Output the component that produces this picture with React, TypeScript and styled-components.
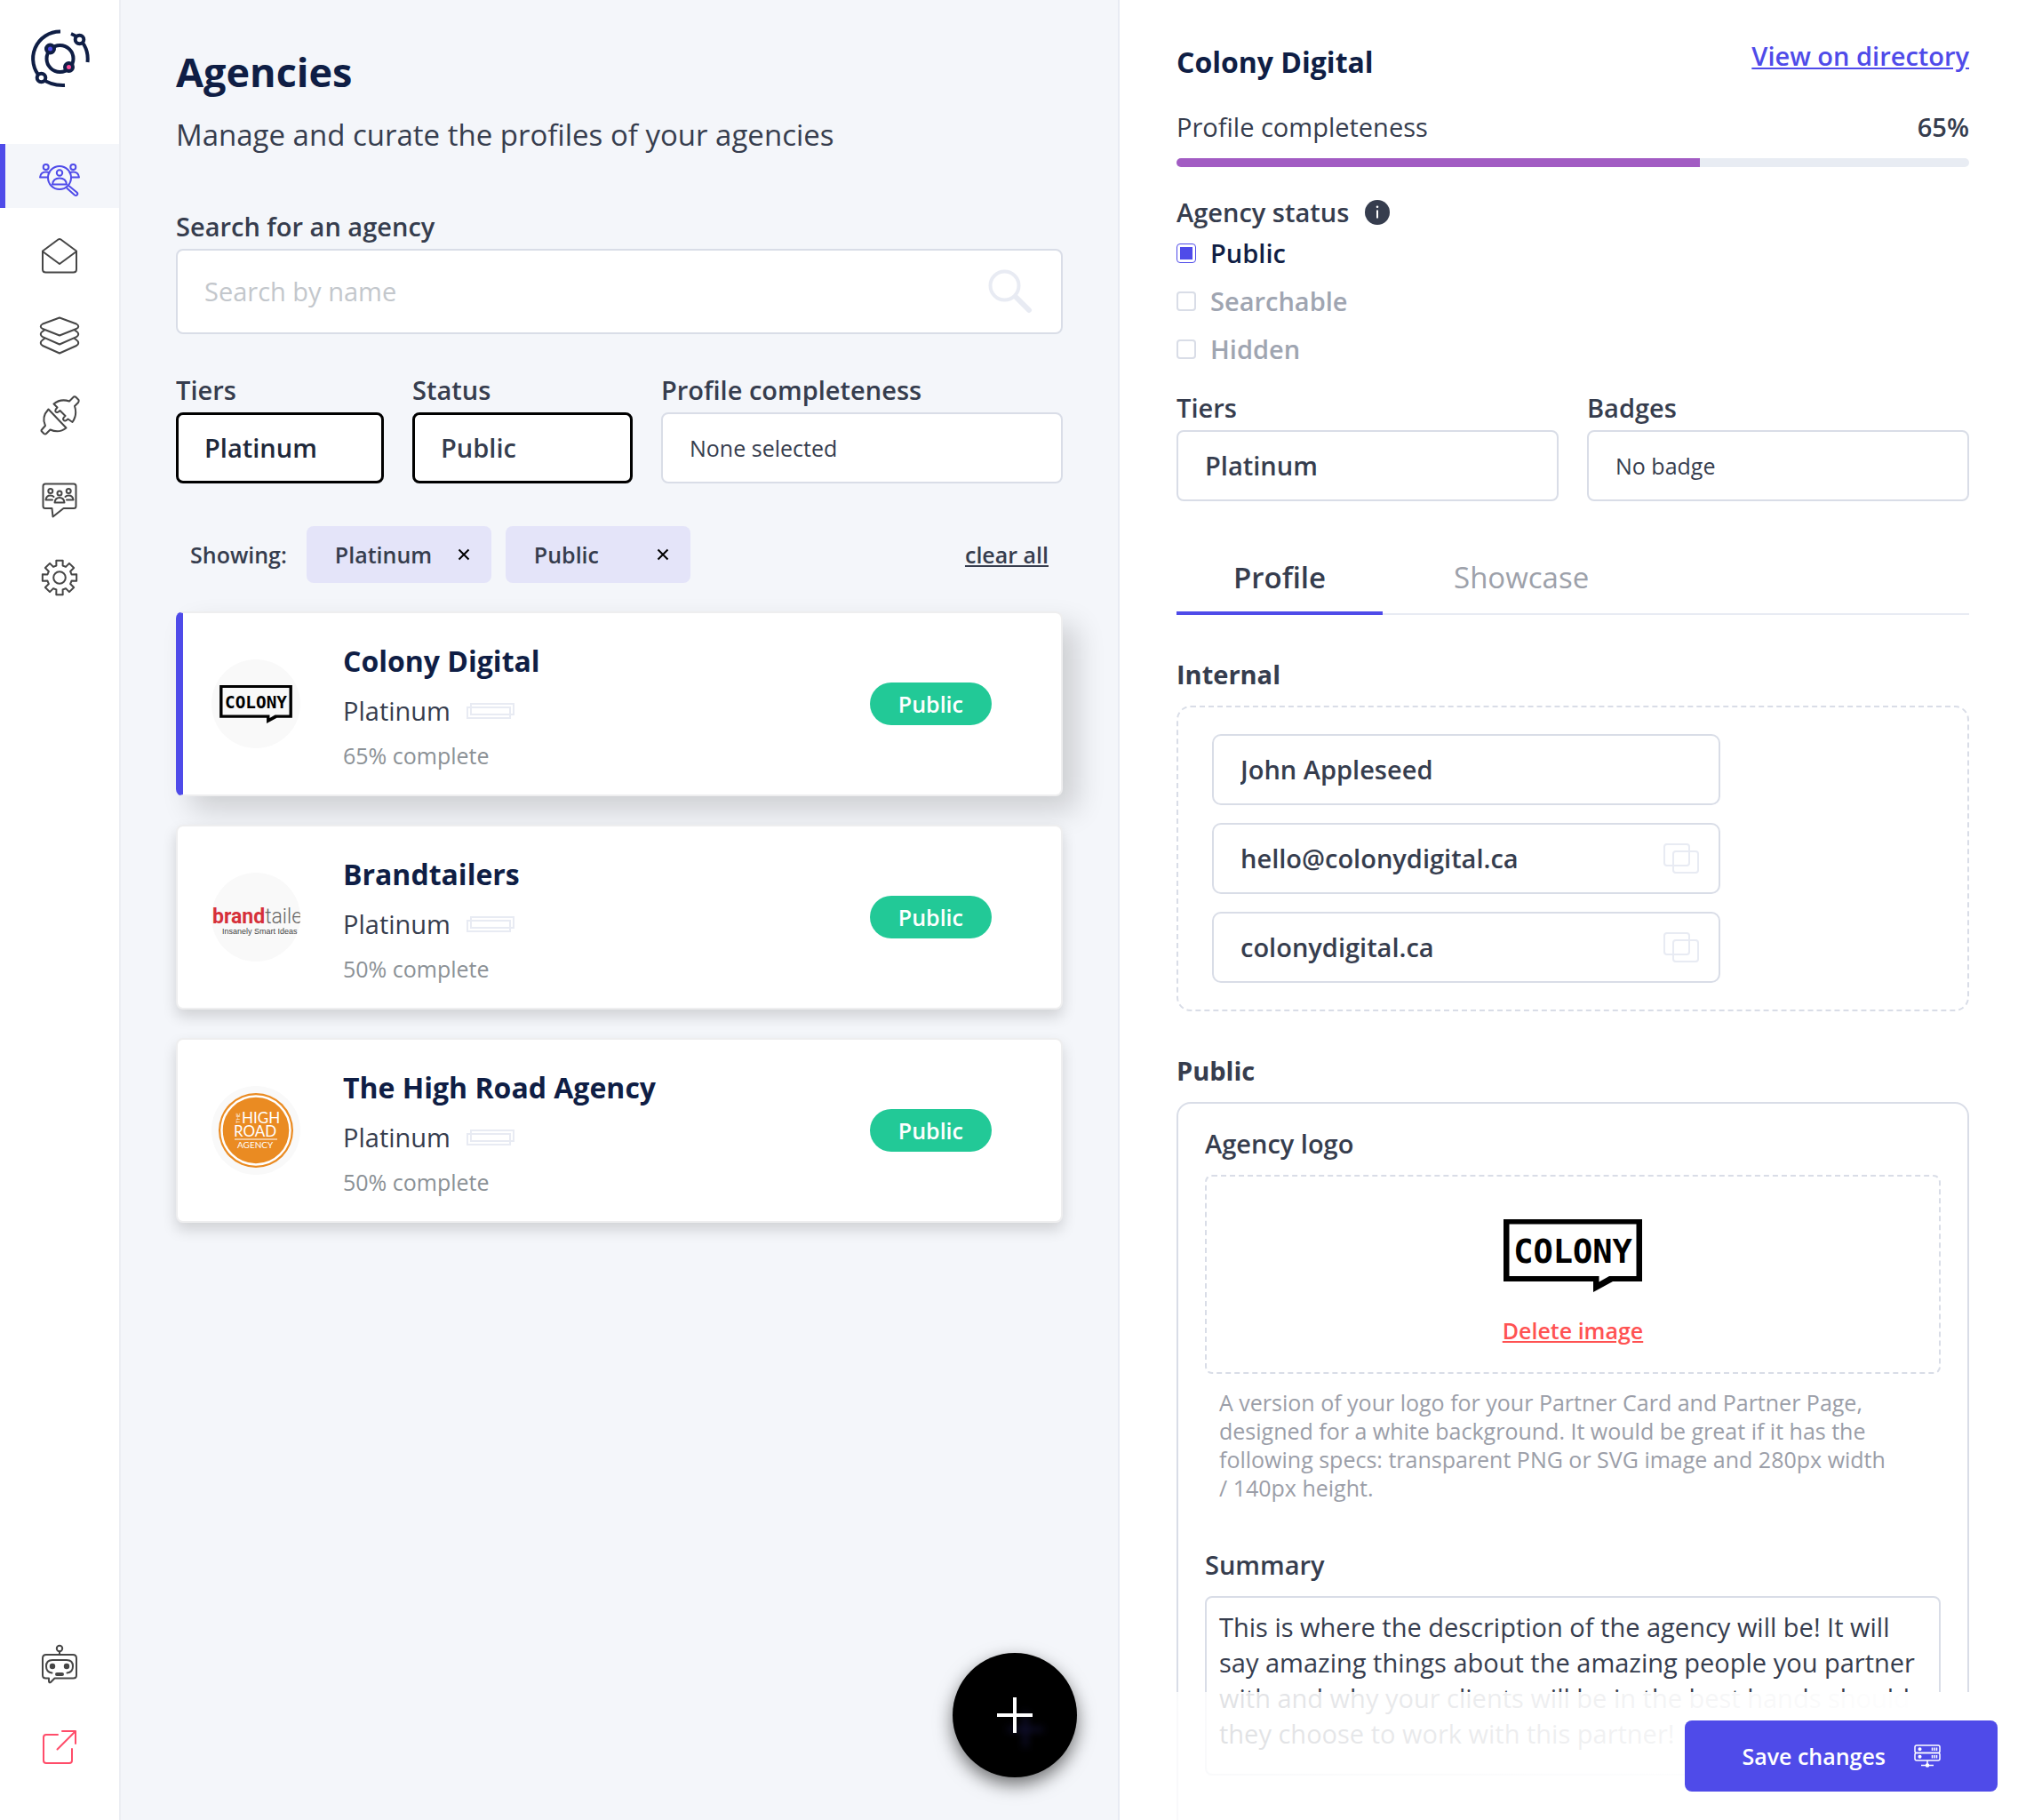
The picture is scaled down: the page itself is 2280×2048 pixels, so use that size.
import React from 'react';
import styled, { createGlobalStyle } from 'styled-components';

const color = {
  ink: '#363d4e',
  navy: '#0f1e45',
  accent: '#4f4be9',
  line: '#d9dde7',
  soft: '#e8ebf3',
  canvas: '#f4f6fa',
  muted: '#9da1aa',
  green: '#22c997',
  red: '#ff5252',
};

const GlobalStyle = createGlobalStyle`
  *, *::before, *::after { box-sizing: border-box; }
  body {
    margin: 0;
    background: #fff;
    color: ${color.ink};
    font-family: "Open Sans", "Noto Sans", sans-serif;
    font-size: 29px;
    line-height: 38px;
  }
  h1, h2, h3, p, ul { margin: 0; padding: 0; }
  button, input, select, textarea { font: inherit; color: inherit; margin: 0; }
  button { cursor: pointer; }
`;

/* ---------- Shell ---------- */

const Shell = styled.div`
  display: grid;
  grid-template-columns: 136px minmax(0, 281fr) minmax(0, 255fr);
  height: 100vh;
  overflow: hidden;
`;

const Sidebar = styled.nav`
  display: flex;
  flex-direction: column;
  border-right: 2px solid #eceef3;
  padding-bottom: 46px;
`;

const Brand = styled.a`
  display: flex;
  justify-content: center;
  height: 162px;
  padding-top: 32px;
`;

const NavGroup = styled.div<{ $end?: boolean }>`
  display: flex;
  flex-direction: column;
  gap: ${(p) => (p.$end ? 22 : 18)}px;
  margin-top: ${(p) => (p.$end ? 'auto' : '0')};
`;

const NavItem = styled.a<{ $active?: boolean; $tone?: string }>`
  display: flex;
  align-items: center;
  justify-content: center;
  height: 72px;
  color: ${(p) => p.$tone || '#464646'};
  background: linear-gradient(
    to right,
    ${(p) => (p.$active ? color.accent : 'transparent')} 6px,
    ${(p) => (p.$active ? color.canvas : 'transparent')} 6px
  );
`;

/* ---------- Shared form parts ---------- */

const Field = styled.div`
  display: flex;
  flex-direction: column;
  gap: 6px;
  min-width: 0;
`;

const Label = styled.label`
  font-weight: 600;
`;

const Select = styled.select<{ $filled?: boolean; $strong?: boolean; $small?: boolean }>`
  appearance: none;
  width: 100%;
  height: 80px;
  padding: 0 ${(p) => (p.$filled ? 29 : 30)}px;
  border: ${(p) => (p.$filled ? '3px solid #000' : `2px solid ${color.line}`)};
  border-radius: 8px;
  background: #fff;
  font-size: ${(p) => (p.$small ? 25 : 29)}px;
  font-weight: ${(p) => (p.$small ? 400 : 600)};
  color: ${(p) => (p.$strong ? '#20283a' : color.ink)};
`;

/* ---------- Agency list ---------- */

const List = styled.main`
  position: relative;
  padding: 51px 62px 48px;
  background: ${color.canvas};
  border-right: 2px solid ${color.soft};
`;

const PageTitle = styled.h1`
  font-size: 45px;
  line-height: 60px;
  font-weight: 700;
  color: ${color.navy};
`;

const Lead = styled.p`
  margin-top: 19px;
  margin-bottom: 62px;
  font-size: 33px;
  line-height: 44px;
`;

const SearchBox = styled.div`
  display: flex;
  align-items: center;
  height: 96px;
  padding: 0 32px 0 30px;
  border: 2px solid ${color.line};
  border-radius: 8px;
  background: #fff;
`;

const SearchInput = styled.input`
  flex: 1;
  min-width: 0;
  border: 0;
  padding: 0;
  outline: 0;
  background: transparent;
  &::placeholder { color: #c3c7cc; opacity: 1; }
`;

const Filters = styled.div`
  display: grid;
  grid-template-columns: 117fr 124fr 226fr;
  gap: 32px;
  margin-top: 44px;
`;

const Showing = styled.div`
  display: flex;
  align-items: center;
  gap: 16px;
  margin: 48px 0 32px;
  padding: 0 16px;
  font-size: 25px;
  font-weight: 600;
`;

const ShowingLabel = styled.span`
  margin-right: 6px;
`;

const Chip = styled.span`
  display: flex;
  align-items: center;
  justify-content: space-between;
  width: 208px;
  height: 64px;
  padding: 0 24px 0 32px;
  border-radius: 8px;
  background: #e4e4f9;
`;

const ChipClose = styled.button`
  display: flex;
  padding: 0;
  border: 0;
  background: none;
  color: #000;
`;

const ClearAll = styled.button`
  margin-left: auto;
  padding: 0;
  border: 0;
  background: none;
  text-decoration: underline;
`;

const Cards = styled.ul`
  display: flex;
  flex-direction: column;
  gap: 32px;
  list-style: none;
`;

const Card = styled.li<{ $selected?: boolean }>`
  display: flex;
  align-items: center;
  gap: 48px;
  height: 208px;
  padding: 0 78px 0 ${(p) => (p.$selected ? 32 : 38)}px;
  border: 2px solid #eeeeef;
  border-left: ${(p) => (p.$selected ? `8px solid ${color.accent}` : '2px solid #eeeeef')};
  border-radius: 8px;
  background: #fff;
  box-shadow: ${(p) =>
    p.$selected
      ? '16px 16px 32px rgba(0, 0, 0, 0.16)'
      : '0 8px 16px rgba(0, 0, 0, 0.15)'};
`;

const Avatar = styled.div`
  display: flex;
  align-items: center;
  justify-content: center;
  flex: none;
  width: 100px;
  height: 100px;
  border-radius: 50%;
  overflow: hidden;
  background: #f9f9f9;
`;

const CardBody = styled.div`
  display: flex;
  flex-direction: column;
  flex: 1;
  gap: 14px;
  min-width: 0;
  padding-top: 4px;
`;

const AgencyName = styled.h2`
  font-size: 32px;
  line-height: 44px;
  font-weight: 700;
  color: ${color.navy};
`;

const Tier = styled.p`
  display: flex;
  align-items: center;
  gap: 18px;
  line-height: 40px;
`;

const Complete = styled.p`
  font-size: 25px;
  line-height: 32px;
  color: #8b9196;
`;

const Pill = styled.span`
  padding: 0 32px;
  border-radius: 24px;
  background: ${color.green};
  color: #fff;
  font-size: 25px;
  line-height: 48px;
  font-weight: 600;
`;

const AddButton = styled.button`
  position: absolute;
  right: 46px;
  bottom: 48px;
  display: flex;
  align-items: center;
  justify-content: center;
  width: 140px;
  height: 140px;
  border: 0;
  border-radius: 50%;
  background: #000;
  box-shadow: 0 8px 20px rgba(0, 0, 0, 0.55);
  svg { filter: drop-shadow(12px 16px 4px rgba(79, 75, 233, 0.25)); }
`;

/* ---------- Detail panel ---------- */

const Panel = styled.aside`
  position: relative;
  height: 100vh;
`;

const PanelScroll = styled.div`
  height: 100%;
  padding: 43px 64px 0;
  overflow-y: auto;
  scrollbar-width: none;
`;

const Between = styled.div`
  display: flex;
  justify-content: space-between;
  align-items: flex-start;
`;

const PanelTitle = styled.h2`
  font-size: 32px;
  line-height: 54px;
  font-weight: 700;
  color: ${color.navy};
`;

const DirectoryLink = styled.a`
  line-height: 40px;
  font-weight: 600;
  color: ${color.accent};
`;

const Completeness = styled.div`
  margin-top: 27px;
`;

const Percent = styled.span`
  font-weight: 600;
`;

const Track = styled.div`
  height: 10px;
  margin-top: 16px;
  border-radius: 5px;
  overflow: hidden;
  background: #e8ecf3;
`;

const Bar = styled.div`
  height: 100%;
  background: #a25cc3;
`;

const StatusGroup = styled.fieldset`
  margin: 32px 0 28px;
  padding: 0;
  border: 0;
`;

const Legend = styled.legend`
  display: flex;
  align-items: center;
  gap: 18px;
  padding: 0;
  margin-bottom: 8px;
  font-weight: 600;
`;

const Options = styled.div`
  display: flex;
  flex-direction: column;
  gap: 16px;
`;

const Option = styled.label`
  display: flex;
  align-items: center;
  gap: 16px;
  font-weight: 600;
  color: #9fa5b1;
  &:has(input:checked) { color: ${color.navy}; }
`;

const Tick = styled.input`
  appearance: none;
  width: 22px;
  height: 22px;
  border: 2px solid ${color.line};
  border-radius: 4px;
  background: #fff;
  &:checked {
    border: 1px solid ${color.accent};
    padding: 3px;
    background: ${color.accent} content-box;
  }
`;

const TwoUp = styled.div`
  display: grid;
  grid-template-columns: 1fr 1fr;
  gap: 32px;
`;

const Tabs = styled.div`
  display: flex;
  gap: 16px;
  margin-top: 64px;
  box-shadow: inset 0 -2px 0 ${color.soft};
`;

const Tab = styled.button<{ $active?: boolean }>`
  padding: 0 64px 16px;
  border: 0;
  border-bottom: 4px solid ${(p) => (p.$active ? color.accent : 'transparent')};
  background: none;
  font-size: 33px;
  line-height: 44px;
  font-weight: ${(p) => (p.$active ? 600 : 400)};
  color: ${(p) => (p.$active ? color.ink : color.muted)};
`;

const SectionTitle = styled.h3`
  margin: 48px 0 16px;
  font-size: 29px;
  line-height: 38px;
  font-weight: 700;
`;

const Internal = styled.div`
  display: flex;
  flex-direction: column;
  gap: 20px;
  padding: 30px 38px;
  border: 2px dashed ${color.line};
  border-radius: 16px;
`;

const CopyField = styled.div`
  display: flex;
  align-items: center;
  max-width: 572px;
  height: 80px;
  padding: 0 22px 0 30px;
  border: 2px solid ${color.line};
  border-radius: 10px;
  background: #fff;
`;

const CopyInput = styled.input`
  flex: 1;
  min-width: 0;
  padding: 0;
  border: 0;
  outline: 0;
  background: transparent;
  font-weight: 600;
`;

const IconButton = styled.button`
  display: flex;
  padding: 0;
  border: 0;
  background: none;
`;

const PublicBox = styled.div`
  display: flex;
  flex-direction: column;
  padding: 26px 30px 160px;
  border: 2px solid ${color.line};
  border-radius: 16px;
`;

const BoxHeading = styled.h4`
  margin: 0 0 16px;
  font-size: 29px;
  line-height: 38px;
  font-weight: 600;
`;

const LogoDrop = styled.div`
  display: flex;
  flex-direction: column;
  align-items: center;
  height: 224px;
  padding-top: 48px;
  border: 2px dashed ${color.line};
  border-radius: 8px;
`;

const DeleteImage = styled.button`
  margin-top: 27px;
  padding: 0;
  border: 0;
  background: none;
  font-size: 25px;
  line-height: 32px;
  font-weight: 600;
  color: ${color.red};
  text-decoration: underline;
`;

const Help = styled.p`
  margin: 16px 0 52px;
  padding: 0 52px 0 16px;
  font-size: 25px;
  line-height: 32px;
  color: #9b9ea8;
`;

const SummaryLabel = styled.label`
  margin-bottom: 16px;
  font-weight: 600;
`;

const Summary = styled.textarea`
  height: 202px;
  padding: 13px 14px;
  border: 2px solid ${color.line};
  border-radius: 8px;
  resize: none;
  overflow: hidden;
  line-height: 40px;
`;

const SaveBar = styled.div`
  position: absolute;
  left: 0;
  right: 0;
  bottom: 0;
  display: flex;
  justify-content: flex-end;
  padding: 32px;
  background: linear-gradient(75deg, rgba(255, 255, 255, 0.82), #fff 90%);
`;

const SaveButton = styled.button`
  display: flex;
  align-items: center;
  gap: 32px;
  height: 80px;
  padding: 0 64px;
  border: 0;
  border-radius: 8px;
  background: ${color.accent};
  color: #fff;
  font-size: 25px;
  font-weight: 600;
`;

/* ---------- Drawings ---------- */

const Line: React.FC<{ w: number; h: number; top?: number; children: React.ReactNode }> = ({ w, h, top = 0, children }) => (
  <svg width={w} height={h + top} viewBox={`0 ${-top} ${w} ${h + top}`} fill="none" stroke="currentColor" strokeWidth="2" strokeLinejoin="round" strokeLinecap="round" aria-hidden="true">
    {children}
  </svg>
);

const OrbitLogo = () => (
  <svg width="68" height="68" viewBox="-1 0 68 68" fill="none" stroke={color.navy} strokeWidth="4" aria-hidden="true">
    <path d="M34 3.500A30.500 30.500 0 0 0 12 55.500C18 60.500 27 64.500 39 64" />
    <path d="M46 6C59 11 66 24 64.500 38" />
    <circle cx="33.500" cy="34" r="15" />
    <circle cx="12.500" cy="55.500" r="4.800" fill="#fff" />
    <circle cx="55.500" cy="12.500" r="4.800" fill="#fff" />
    <circle cx="22.500" cy="23" r="4.500" fill={color.accent} />
    <circle cx="43.500" cy="43.500" r="4.500" fill="#ff4d9a" />
  </svg>
);

const AgenciesIcon = () => (
  <Line w={48} h={40} top={8}>
    <circle cx="24" cy="18" r="13" />
    <circle cx="24" cy="12.500" r="3.200" />
    <path d="M16 25.500C16.500 20.500 19 18.500 24 18.500S31.500 20.500 32 25.500Z" />
    <circle cx="8.700" cy="6" r="3" />
    <path d="M11 17.500H2C2.500 13.500 4.500 11.500 8.700 11.500C10.500 11.500 11.500 11.800 12.500 12.500" />
    <circle cx="39.300" cy="6" r="3" />
    <path d="M37 17.500H46C45.500 13.500 43.500 11.500 39.300 11.500C37.500 11.500 36.500 11.800 35.500 12.500" />
    <path d="M32.500 30L41 37.500C43 39 45.500 36.500 43.500 34.500L35 27.500" />
  </Line>
);

const MailIcon = () => (
  <Line w={42} h={42}>
    <path d="M2 15.500L19.500 2.500Q21 1.500 22.500 2.500L40 15.500V36Q40 39.500 36.500 39.500H5.500Q2 39.500 2 36Z" />
    <path d="M2 16L21 30L40 16" />
  </Line>
);

const LayersIcon = () => (
  <Line w={46} h={44}>
    <path d="M23 1.500L42 8.500Q46.500 11 42 14L23 21.500L4 14Q-.5 11 4 8.500Z" />
    <path d="M6 15.500L4 16.800Q-.5 20 4 23.200L23 31.500L42 23.200Q46.500 20 42 16.800L40 15.500" />
    <path d="M6 25L4 26.500Q-.5 30 4 33L23 41.500L42 33Q46.500 30 42 26.500L40 25" />
  </Line>
);

const PlugIcon = () => (
  <Line w={45} h={46}>
    <path d="M15.500 9.500C21 5 27 4.500 33 6.500L38 1.500Q39.500 1 40.500 2L43.500 5Q44 6.500 43 8L39 12C41 18 40 25 36.500 30L31.500 26.500Q28 30 26.500 27.500Q25 26 28.500 23L22.500 17Q19 20.500 17.500 18Q16.500 16.500 19.500 13.500Z" />
    <path d="M9.500 15.500L29.500 36.500C24 41 17 41 11.500 38.500L7 43Q6 44 4.500 43L2 40.500Q1 39.500 2 38.500L6 34C3 28 4.500 21 9.500 15.500Z" />
  </Line>
);

const CommunityIcon = () => (
  <Line w={40} h={40} top={10}>
    <path d="M11.500 29H4Q1.500 29 1.500 26.500V4Q1.500 1.500 4 1.500H36Q38.500 1.500 38.500 4V26.500Q38.500 29 36 29H24.500L12.500 38.500Z" />
    <circle cx="9.800" cy="9.500" r="2.500" />
    <circle cx="20" cy="12" r="2.500" />
    <circle cx="30.200" cy="9.500" r="2.500" />
    <path d="M12 19.500H4.500C5 16 7 14.500 9.800 14.500Q12 14.500 13.500 16" />
    <path d="M28 19.500H35.500C35 16 33 14.500 30.200 14.500Q28 14.500 26.500 16" />
    <path d="M14.500 22.500C15 18.500 17 17 20 17S25 18.500 25.500 22.500Z" />
  </Line>
);

const gearPath = (() => {
  const pts: string[] = [];
  for (let i = 0; i < 8; i++) {
    const a = (i * Math.PI) / 4;
    [[14, -0.26], [19.5, -0.19], [19.5, 0.19], [14, 0.26]].forEach(([r, d]) => {
      pts.push(`${(21 + r * Math.sin(a + d)).toFixed(2)} ${(21 - r * Math.cos(a + d)).toFixed(2)}`);
    });
  }
  return `M${pts.join('L')}Z`;
})();

const GearIcon = () => (
  <Line w={42} h={42} top={4}>
    <path d={gearPath} />
    <circle cx="21" cy="21" r="6.800" />
  </Line>
);

const BotIcon = () => (
  <Line w={42} h={45}>
    <circle cx="21" cy="5" r="3.200" />
    <path d="M21 8.500V12" />
    <path d="M9 38.500H5.500Q2 38.500 2 35V16Q2 12 6 12H36Q40 12 40 16V35Q40 38.500 36.500 38.500H15.500L11 43Q9 44 9 41.500Z" />
    <path d="M12.500 32.500C8 32 6 29 6 25Q6 18 13 18H29Q36 18 36 25C36 29 34 32 29.500 32.500" />
    <circle cx="13" cy="25" r="2.200" fill="currentColor" />
    <circle cx="29" cy="25" r="2.200" fill="currentColor" />
    <rect x="17" y="33" width="8" height="2" rx="1" fill="currentColor" />
  </Line>
);

const ExternalIcon = () => (
  <Line w={40} h={40}>
    <path d="M18 6H5Q2 6 2 9V35Q2 38 5 38H31Q34 38 34 35V22" />
    <path d="M23 2H38V16M38 2L17.500 22.500" />
  </Line>
);

const SearchIcon = () => (
  <svg width="50" height="50" viewBox="0 0 50 50" fill="none" stroke={color.soft} strokeWidth="4" strokeLinecap="round" aria-hidden="true">
    <circle cx="18.500" cy="18.500" r="16" />
    <path d="M31 31L46 46" strokeWidth="6" />
  </svg>
);

const CrossIcon = () => (
  <svg width="14" height="14" viewBox="0 0 14 14" stroke="currentColor" strokeWidth="2" aria-hidden="true">
    <path d="M1.500 1.500L12.500 12.500M12.500 1.500L1.500 12.500" />
  </svg>
);

const TicketIcon = () => (
  <svg width="54" height="18" viewBox="0 0 54 18" fill="none" stroke={color.soft} strokeWidth="2" aria-hidden="true">
    <rect x="5" y="1" width="48" height="12" />
    <rect x="1" y="5" width="48" height="12" />
  </svg>
);

const CopyIcon = () => (
  <svg width="40" height="34" viewBox="0 0 40 34" fill="none" stroke={color.soft} strokeWidth="2" aria-hidden="true">
    <rect x="1" y="1" width="28" height="24" rx="3" />
    <rect x="11" y="9" width="28" height="24" rx="3" />
  </svg>
);

const InfoIcon = () => (
  <svg width="28" height="28" viewBox="0 0 28 28" aria-hidden="true">
    <circle cx="14" cy="14" r="14" fill={color.ink} />
    <circle cx="14" cy="7.800" r="1.300" fill="#fff" />
    <path d="M14 11.500V20.500" stroke="#fff" strokeWidth="2" />
  </svg>
);

const ServerIcon = () => (
  <svg width="30" height="26" viewBox="0 0 30 26" fill="none" stroke="currentColor" strokeWidth="1.500" aria-hidden="true">
    <rect x="1" y="1" width="28" height="8.500" rx="2" />
    <rect x="1" y="9.500" width="28" height="8.500" rx="2" />
    <path d="M20.500 3.500V7M23 3.500V7M25.500 3.500V7M20.500 12V15.500M23 12V15.500M25.500 12V15.500M15 18V23M8 23.500H22" />
    <circle cx="6.500" cy="5.200" r="1.300" fill="currentColor" />
    <circle cx="6.500" cy="13.800" r="1.300" fill="currentColor" />
    <circle cx="15" cy="23.500" r="1.500" fill="currentColor" />
  </svg>
);

const PlusIcon = () => (
  <svg width="40" height="40" viewBox="0 0 40 40" stroke="#fff" strokeWidth="4" aria-hidden="true">
    <path d="M20 0V40M0 20H40" />
  </svg>
);

const ColonyLogo: React.FC<{ width: number; height: number }> = ({ width, height }) => (
  <svg width={width} height={height} viewBox="0 0 156 82" role="img" aria-label="Colony">
    <path fillRule="evenodd" d="M0 0H156V70H123L101 82V70H0ZM6.500 5.500V64H107.500V70.500L119 64H149.500V5.500Z" />
    <text x="78" y="49" textAnchor="middle" fontFamily='"DejaVu Sans Mono", monospace' fontWeight="700" fontSize="37">
      COLONY
    </text>
  </svg>
);

const BrandtailersLogo = () => (
  <svg width="100" height="100" viewBox="0 0 100 100" role="img" aria-label="Brandtailers">
    <text x="1" y="57" fontFamily="Roboto, sans-serif" fontSize="23">
      <tspan fill="#d6303a" fontWeight="700">brand</tspan>
      <tspan fill="#666" fontWeight="300">taile</tspan>
    </text>
    <text x="12" y="69" fontFamily='"Liberation Sans", sans-serif' fontSize="9" fill="#444">
      Insanely Smart Ideas
    </text>
  </svg>
);

const HighRoadLogo = () => (
  <svg width="84" height="84" viewBox="0 0 84 84" role="img" aria-label="The High Road Agency">
    <circle cx="42" cy="42" r="42" fill="#ea8b22" />
    <circle cx="42" cy="42" r="38.500" fill="none" stroke="#fff" strokeWidth="2.500" />
    <g fill="#fff" fontFamily="Lato, sans-serif">
      <text x="26" y="34" fontSize="17">HIGH</text>
      <text x="17" y="49" fontSize="17">ROAD</text>
      <text transform="translate(24 34) rotate(-90)" fontSize="6">THE</text>
      <text x="21" y="62" fontSize="10">AGENCY</text>
    </g>
    <path d="M18 52H66" stroke="#fff" />
  </svg>
);

/* ---------- Data ---------- */

const navItems = [
  { label: 'Agencies', icon: <AgenciesIcon />, active: true },
  { label: 'Inbox', icon: <MailIcon /> },
  { label: 'Collections', icon: <LayersIcon /> },
  { label: 'Integrations', icon: <PlugIcon /> },
  { label: 'Community', icon: <CommunityIcon /> },
  { label: 'Settings', icon: <GearIcon /> },
];

const agencies = [
  { name: 'Colony Digital', complete: 65, logo: <ColonyLogo width={82} height={43} />, selected: true },
  { name: 'Brandtailers', complete: 50, logo: <BrandtailersLogo /> },
  { name: 'The High Road Agency', complete: 50, logo: <HighRoadLogo /> },
];

const contacts = [
  { label: 'Contact name', value: 'John Appleseed', copy: false },
  { label: 'Contact email', value: 'hello@colonydigital.ca', copy: true },
  { label: 'Website', value: 'colonydigital.ca', copy: true },
];

const summary =
  'This is where the description of the agency will be! It will say amazing things about the amazing people you partner with and why your clients will be in the best hands should they choose to work with this partner!';

export default function App() {
  const [status, setStatus] = React.useState('Public');

  return (
    <>
      <GlobalStyle />
      <Shell>
        <Sidebar aria-label="Primary">
          <Brand href="#" aria-label="Home">
            <OrbitLogo />
          </Brand>
          <NavGroup>
            {navItems.map((item) => (
              <NavItem key={item.label} href="#" aria-label={item.label} $active={item.active} $tone={item.active ? color.accent : undefined}>
                {item.icon}
              </NavItem>
            ))}
          </NavGroup>
          <NavGroup $end>
            <NavItem href="#" aria-label="Assistant">
              <BotIcon />
            </NavItem>
            <NavItem href="#" aria-label="Open site" $tone="#ff4d6a">
              <ExternalIcon />
            </NavItem>
          </NavGroup>
        </Sidebar>

        <List>
          <PageTitle>Agencies</PageTitle>
          <Lead>Manage and curate the profiles of your agencies</Lead>

          <Field>
            <Label htmlFor="search">Search for an agency</Label>
            <SearchBox>
              <SearchInput id="search" type="text" placeholder="Search by name" />
              <SearchIcon />
            </SearchBox>
          </Field>

          <Filters>
            <Field>
              <Label htmlFor="filter-tier">Tiers</Label>
              <Select id="filter-tier" $filled $strong>
                <option>Platinum</option>
              </Select>
            </Field>
            <Field>
              <Label htmlFor="filter-status">Status</Label>
              <Select id="filter-status" $filled>
                <option>Public</option>
              </Select>
            </Field>
            <Field>
              <Label htmlFor="filter-complete">Profile completeness</Label>
              <Select id="filter-complete" $small>
                <option>None selected</option>
              </Select>
            </Field>
          </Filters>

          <Showing>
            <ShowingLabel>Showing:</ShowingLabel>
            {['Platinum', 'Public'].map((name) => (
              <Chip key={name}>
                {name}
                <ChipClose type="button" aria-label={`Remove ${name}`}>
                  <CrossIcon />
                </ChipClose>
              </Chip>
            ))}
            <ClearAll type="button">clear all</ClearAll>
          </Showing>

          <Cards>
            {agencies.map((agency) => (
              <Card key={agency.name} $selected={agency.selected}>
                <Avatar>{agency.logo}</Avatar>
                <CardBody>
                  <AgencyName>{agency.name}</AgencyName>
                  <Tier>
                    Platinum
                    <TicketIcon />
                  </Tier>
                  <Complete>{agency.complete}% complete</Complete>
                </CardBody>
                <Pill>Public</Pill>
              </Card>
            ))}
          </Cards>

          <AddButton type="button" aria-label="Add agency">
            <PlusIcon />
          </AddButton>
        </List>

        <Panel>
          <PanelScroll>
            <Between>
              <PanelTitle>Colony Digital</PanelTitle>
              <DirectoryLink href="#">View on directory</DirectoryLink>
            </Between>

            <Completeness>
              <Between>
                <span>Profile completeness</span>
                <Percent>65%</Percent>
              </Between>
              <Track>
                <Bar style={{ width: '66%' }} />
              </Track>
            </Completeness>

            <StatusGroup>
              <Legend>
                Agency status
                <InfoIcon />
              </Legend>
              <Options>
                {['Public', 'Searchable', 'Hidden'].map((name) => (
                  <Option key={name}>
                    <Tick type="checkbox" checked={status === name} onChange={() => setStatus(name)} />
                    {name}
                  </Option>
                ))}
              </Options>
            </StatusGroup>

            <TwoUp>
              <Field>
                <Label htmlFor="tier">Tiers</Label>
                <Select id="tier">
                  <option>Platinum</option>
                </Select>
              </Field>
              <Field>
                <Label htmlFor="badge">Badges</Label>
                <Select id="badge" $small>
                  <option>No badge</option>
                </Select>
              </Field>
            </TwoUp>

            <Tabs role="tablist">
              <Tab type="button" role="tab" aria-selected="true" $active>
                Profile
              </Tab>
              <Tab type="button" role="tab" aria-selected="false">
                Showcase
              </Tab>
            </Tabs>

            <SectionTitle>Internal</SectionTitle>
            <Internal>
              {contacts.map((contact) => (
                <CopyField key={contact.label}>
                  <CopyInput type="text" aria-label={contact.label} defaultValue={contact.value} />
                  {contact.copy && (
                    <IconButton type="button" aria-label={`Copy ${contact.label}`}>
                      <CopyIcon />
                    </IconButton>
                  )}
                </CopyField>
              ))}
            </Internal>

            <SectionTitle>Public</SectionTitle>
            <PublicBox>
              <BoxHeading>Agency logo</BoxHeading>
              <LogoDrop>
                <ColonyLogo width={156} height={82} />
                <DeleteImage type="button">Delete image</DeleteImage>
              </LogoDrop>
              <Help>
                A version of your logo for your Partner Card and Partner Page, designed for a white background. It would
                be great if it has the following specs: transparent PNG or SVG image and 280px width / 140px height.
              </Help>
              <SummaryLabel htmlFor="summary">Summary</SummaryLabel>
              <Summary id="summary" defaultValue={summary} />
            </PublicBox>
          </PanelScroll>

          <SaveBar>
            <SaveButton type="button">
              Save changes
              <ServerIcon />
            </SaveButton>
          </SaveBar>
        </Panel>
      </Shell>
    </>
  );
}
